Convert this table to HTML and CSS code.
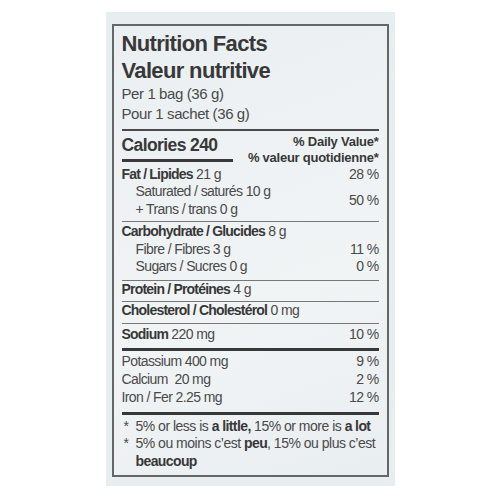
FILE: index.html
```html
<!DOCTYPE html>
<html lang="en">
<head>
    <meta charset="UTF-8">
    <title>Nutrition Facts</title>
    <link rel="stylesheet" href="styles.css">
</head>
<body>
    <div class="bag">
        <div class="label">
            <div class="title">Nutrition Facts<br>Valeur nutritive</div>
            <div class="serving">Per 1 bag (36 g)<br>Pour 1 sachet (36 g)</div>
            <div class="calories">
                <div class="cal">Calories 240</div>
                <div class="dv">% Daily Value*<br>% valeur quotidienne*</div>
            </div>
            <div class="section fat">
                <div class="row"><span><b>Fat / Lipides</b> 21 g</span><span>28 %</span></div>
                <div class="group">
                    <div>
                        <div class="row sub">Saturated / saturés 10 g</div>
                        <div class="row sub">+ Trans / trans 0 g</div>
                    </div>
                    <span>50 %</span>
                </div>
            </div>
            <div class="section carb">
                <div class="row"><span><b>Carbohydrate / Glucides</b> 8 g</span></div>
                <div class="row sub"><span>Fibre / Fibres 3 g</span><span>11 %</span></div>
                <div class="row sub"><span>Sugars / Sucres 0 g</span><span>0 %</span></div>
            </div>
            <div class="section">
                <div class="row"><span><b>Protein / Protéines</b> 4 g</span></div>
            </div>
            <div class="section chol">
                <div class="row"><span><b>Cholesterol / Cholestérol</b> 0 mg</span></div>
            </div>
            <div class="section sodium">
                <div class="row"><span><b>Sodium</b> 220 mg</span><span>10 %</span></div>
            </div>
            <div class="minerals">
                <div class="row"><span>Potassium 400 mg</span><span>9 %</span></div>
                <div class="row"><span>Calcium &nbsp;20 mg</span><span>2 %</span></div>
                <div class="row"><span>Iron / Fer 2.25 mg</span><span>12 %</span></div>
            </div>
            <div class="notes">
                <div class="note"><span class="star">*</span><span>5% or less is <b>a little,</b> 15% or more is <b>a lot</b></span></div>
                <div class="note"><span class="star">*</span><span>5% ou moins c’est <b>peu</b>, 15% ou plus c’est <b>beaucoup</b></span></div>
            </div>
        </div>
    </div>
</body>
</html>
```

FILE: styles.css
```css
body {
    margin: 0;
    background: #fff;
    font-family: "Liberation Sans", Arial, sans-serif;
    color: #4a4a4a;
}
.bag {
    width: 277px;
    margin: 12px auto 0;
    padding: 12px 6px 9px;
    background: #e8edef;
}
.label {
    border: 2px solid #666;
    padding: 0 8px 5px;
    background: linear-gradient(160deg, #eaeff1, #f1f4f5 60%, #e9eef0);
}
b {
    color: #383838;
    letter-spacing: -0.8px;
}
.title {
    padding-top: 4px;
    font-size: 22px;
    font-weight: bold;
    line-height: 27px;
    letter-spacing: -0.65px;
    color: #383838;
}
.serving {
    font-size: 15px;
    line-height: 20px;
    letter-spacing: -0.4px;
    padding-bottom: 5px;
}
.calories {
    display: flex;
    justify-content: space-between;
    align-items: flex-start;
    border-top: 2px solid #4a4a4a;
    padding-top: 2.5px;
}
.cal {
    width: 111px;
    font-size: 17.5px;
    font-weight: bold;
    line-height: 22px;
    letter-spacing: -0.6px;
    color: #383838;
    padding-bottom: 3.5px;
    border-bottom: 3px solid #3a3a3a;
}
.dv {
    text-align: right;
    font-size: 13px;
    font-weight: bold;
    line-height: 16px;
    letter-spacing: -0.25px;
    color: #383838;
}
.section {
    border-top: 1px solid #777;
    padding: 0 0 3px;
    font-size: 14px;
    line-height: 17.5px;
    letter-spacing: -0.6px;
}
.section.fat {
    border-top: none;
}
.section.carb {
    padding: 1px 0 4px;
}
.section.chol {
    padding-bottom: 3.5px;
}
.section.sodium {
    padding: 1.5px 0 4.5px;
}
.row {
    display: flex;
    justify-content: space-between;
}
.sub {
    padding-left: 14px;
}
.group {
    display: flex;
    justify-content: space-between;
    align-items: center;
}
.minerals {
    border-top: 3px solid #383838;
    padding: 1.5px 0 6px;
    font-size: 14px;
    line-height: 18px;
    letter-spacing: -0.6px;
}
.notes {
    border-top: 3px solid #383838;
    padding-top: 2.5px;
    font-size: 14px;
    line-height: 17.5px;
    letter-spacing: -0.5px;
}
.notes b {
    letter-spacing: -0.6px;
}
.note {
    display: flex;
}
.star {
    flex: none;
    width: 14px;
    padding-left: 2px;
    box-sizing: border-box;
}
```
